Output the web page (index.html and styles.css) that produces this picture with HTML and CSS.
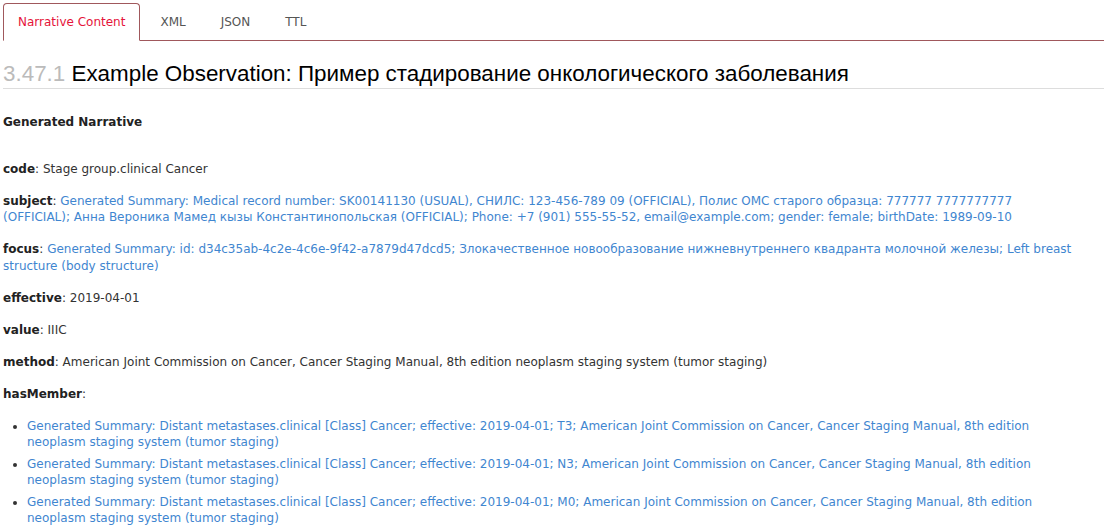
FILE: index.html
```html
<!DOCTYPE html>
<html>
<head>
<meta charset="utf-8">
<link rel="stylesheet" href="styles.css">
</head>
<body>
<ul class="tabs">
  <li class="tab active">Narrative Content</li>
  <li class="tab">XML</li>
  <li class="tab">JSON</li>
  <li class="tab">TTL</li>
</ul>
<h2 class="title"><span class="num">3.47.1</span> Example Observation: Пример стадирование онкологического заболевания</h2>
<div class="narrative">
  <p class="gen"><b>Generated Narrative</b></p>
  <p><b>code</b>: Stage group.clinical Cancer</p>
  <p><b>subject</b>: <a>Generated Summary: Medical record number: SK00141130 (USUAL), СНИЛС: 123-456-789 09 (OFFICIAL), Полис ОМС старого образца: 777777 7777777777 (OFFICIAL); Анна Вероника Мамед кызы Константинопольская (OFFICIAL); Phone: +7 (901) 555-55-52, email@example.com; gender: female; birthDate: 1989-09-10</a></p>
  <p><b>focus</b>: <a>Generated Summary: id: d34c35ab-4c2e-4c6e-9f42-a7879d47dcd5; Злокачественное новообразование нижневнутреннего квадранта молочной железы; Left breast structure (body structure)</a></p>
  <p><b>effective</b>: 2019-04-01</p>
  <p><b>value</b>: IIIC</p>
  <p><b>method</b>: American Joint Commission on Cancer, Cancer Staging Manual, 8th edition neoplasm staging system (tumor staging)</p>
  <p><b>hasMember</b>:</p>
  <ul class="members">
    <li><a>Generated Summary: Distant metastases.clinical [Class] Cancer; effective: 2019-04-01; T3; American Joint Commission on Cancer, Cancer Staging Manual, 8th edition neoplasm staging system (tumor staging)</a></li>
    <li><a>Generated Summary: Distant metastases.clinical [Class] Cancer; effective: 2019-04-01; N3; American Joint Commission on Cancer, Cancer Staging Manual, 8th edition neoplasm staging system (tumor staging)</a></li>
    <li><a>Generated Summary: Distant metastases.clinical [Class] Cancer; effective: 2019-04-01; M0; American Joint Commission on Cancer, Cancer Staging Manual, 8th edition neoplasm staging system (tumor staging)</a></li>
  </ul>
</div>
</body>
</html>
```
FILE: styles.css
```css
html, body {
  margin: 0;
  padding: 0;
  background: #fff;
}
body {
  padding: 3px 0 0 3px;
  font-family: "DejaVu Sans", Verdana, sans-serif;
  font-size: 12px;
  color: #333;
}
.tabs {
  list-style: none;
  margin: 0;
  padding: 0;
  display: flex;
  border-bottom: 1px solid #a0585c;
}
.tab {
  padding: 11px 14px 10px 15px;
  margin-left: 4px;
  line-height: 15px;
  color: #555;
  margin-bottom: -1px;
  border: 1px solid transparent;
  border-radius: 4px 4px 0 0;
}
.tab.active {
  padding-left: 14px;
  padding-right: 14px;
  margin-left: 0;
  color: #e5133a;
  border-color: #a0585c;
  border-bottom-color: #fff;
  background: #fff;
}
.title {
  font-family: "Liberation Sans", Arial, sans-serif;
  font-weight: normal;
  font-size: 22.4px;
  color: #000;
  margin: 21px 0 0 0;
  padding-bottom: 2px;
  line-height: 24px;
  border-bottom: 1px solid #ddd;
}
.num {
  color: #bbb;
}
.narrative {
  line-height: 16.5px;
  padding-right: 26px;
}
.narrative p {
  margin: 0 0 15.5px 0;
}
.narrative p.gen {
  margin: 25px 0 30px 0;
}
b {
  font-weight: bold;
  color: #222;
}
a {
  color: #3f86d0;
}
.members {
  margin: 0;
  padding-left: 24px;
}
.members li {
  margin-bottom: 5px;
}
```
